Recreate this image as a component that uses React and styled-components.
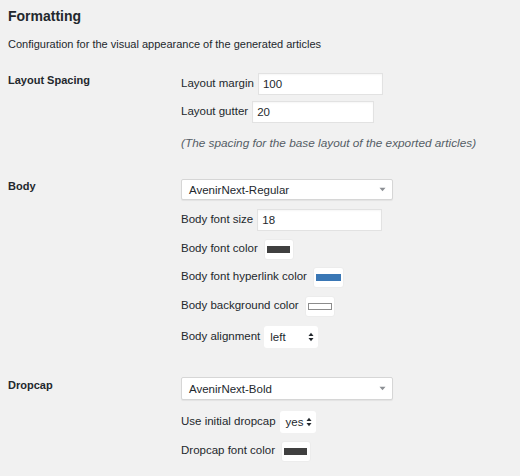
import React from 'react'
import styled, { createGlobalStyle } from 'styled-components'

const GlobalStyle = createGlobalStyle`
  html, body {
    margin: 0;
    padding: 0;
    background: #f1f1f1;
  }
  body {
    font-family: "Liberation Sans", Arial, sans-serif;
    color: #23282d;
  }
`

const Page = styled.div`
  padding: 5px 8px 0 8px;
  width: 512px;
  height: 476px;
  box-sizing: border-box;
  overflow: hidden;
`

const Title = styled.h2`
  font-size: 14px;
  font-weight: 700;
  margin: 1px 0 0 0;
  line-height: 20px;
`

const Description = styled.p`
  font-size: 11px;
  margin: 11px 0 0 0;
  line-height: 14px;
  color: #23282d;
`

const Table = styled.div`
  display: flex;
  flex-direction: column;
  margin-top: 22px;
`

const Section = styled.div`
  display: grid;
  grid-template-columns: 173px 1fr;
  margin-bottom: ${({ $gap }) => $gap || 0}px;
`

const SectionLabel = styled.div`
  font-size: 11px;
  font-weight: 700;
  line-height: 14px;
  padding-top: ${({ $top }) => $top || 0}px;
`

const Fields = styled.div`
  display: flex;
  flex-direction: column;
  gap: ${({ $gap }) => $gap || 7}px;
`

const Row = styled.div`
  display: flex;
  align-items: center;
  gap: 4px;
  height: ${({ $h }) => $h || 22}px;
  margin-top: ${({ $mt }) => $mt || 0}px;
  font-size: 11.5px;
`

const Label = styled.span`
  white-space: nowrap;
  margin-top: -2px;
`

const TextInput = styled.div`
  box-sizing: border-box;
  width: ${({ $w }) => $w || 125}px;
  height: 22px;
  background: #fff;
  border: 1px solid #e2e2e2;
  box-shadow: inset 0 1px 2px rgba(0, 0, 0, 0.04);
  padding: 0 4px;
  display: flex;
  align-items: center;
  font-size: 11.5px;
`

const Note = styled.div`
  font-size: 11.8px;
  font-style: italic;
  color: #555d66;
  margin-top: 7px;
  line-height: 14px;
`

const Select = styled.div`
  box-sizing: border-box;
  width: 212px;
  height: ${({ $h }) => $h || 22}px;
  background: #fff;
  border: 1px solid #d6d6d6;
  border-radius: 2px;
  box-shadow: 0 1px 1px rgba(0, 0, 0, 0.06);
  display: flex;
  align-items: center;
  justify-content: space-between;
  padding: 0 6px 0 7px;
  font-size: 11.5px;
`

const SmallSelect = styled.div`
  box-sizing: border-box;
  width: ${({ $w }) => $w || 54}px;
  height: 22px;
  background: #fff;
  border-radius: 3px;
  display: flex;
  align-items: center;
  justify-content: space-between;
  padding: 0 4px 0 6px;
  font-size: 11.5px;
`

const Swatch = styled.div`
  box-sizing: border-box;
  width: ${({ $w }) => $w || 30}px;
  height: 21px;
  margin-left: 2px;
  background: #fff;
  border: 1px solid #ececec;
  border-radius: 3px;
  display: flex;
  align-items: center;
  justify-content: center;
`

const SwatchColor = styled.span`
  display: block;
  width: ${({ $w }) => $w || 21}px;
  height: 5px;
  background: ${({ $color }) => $color};
  border: 1px solid ${({ $border }) => $border || 'transparent'};
`

function DownArrow() {
  return (
    <svg width="7" height="5" viewBox="0 0 7 5">
      <path d="M0.5 0.8 L6.5 0.8 L3.5 4.3 Z" fill="#8c8f94" />
    </svg>
  )
}

function UpDown() {
  return (
    <svg width="6" height="10" viewBox="0 0 6 10">
      <path d="M0.5 4 L3 0.8 L5.5 4 Z" fill="#23282d" />
      <path d="M0.5 6 L3 9.2 L5.5 6 Z" fill="#23282d" />
    </svg>
  )
}

export default function App() {
  return (
    <>
      <GlobalStyle />
      <Page>
        <Title>Formatting</Title>
        <Description>Configuration for the visual appearance of the generated articles</Description>
        <Table>
          <Section $gap={29}>
            <SectionLabel>Layout Spacing</SectionLabel>
            <Fields $gap={6}>
              <Row>
                <Label>Layout margin</Label>
                <TextInput>100</TextInput>
              </Row>
              <Row>
                <Label>Layout gutter</Label>
                <TextInput $w={122}>20</TextInput>
              </Row>
              <Note>(The spacing for the base layout of the exported articles)</Note>
            </Fields>
          </Section>

          <Section $gap={28}>
            <SectionLabel>Body</SectionLabel>
            <Fields $gap={7}>
              <Select $h={21}>
                <span>AvenirNext-Regular</span>
                <DownArrow />
              </Select>
              <Row $h={23} $mt={1}>
                <Label>Body font size</Label>
                <TextInput>18</TextInput>
              </Row>
              <Row>
                <Label>Body font color</Label>
                <Swatch>
                  <SwatchColor $color="#404040" />
                </Swatch>
              </Row>
              <Row $mt={-1}>
                <Label>Body font hyperlink color</Label>
                <Swatch $w={31}>
                  <SwatchColor $color="#3a77b5" $w={23} />
                </Swatch>
              </Row>
              <Row>
                <Label>Body background color</Label>
                <Swatch $w={30}>
                  <SwatchColor $color="#fff" $border="#8c8c8c" $w={22} />
                </Swatch>
              </Row>
              <Row $h={24} $mt={1}>
                <Label>Body alignment</Label>
                <SmallSelect>
                  <span>left</span>
                  <UpDown />
                </SmallSelect>
              </Row>
            </Fields>
          </Section>

          <Section>
            <SectionLabel $top={1}>Dropcap</SectionLabel>
            <Fields $gap={7}>
              <Select $h={23}>
                <span>AvenirNext-Bold</span>
                <DownArrow />
              </Select>
              <Row $mt={4}>
                <Label>Use initial dropcap</Label>
                <SmallSelect $w={36}>
                  <span>yes</span>
                  <UpDown />
                </SmallSelect>
              </Row>
              <Row>
                <Label>Dropcap font color</Label>
                <Swatch>
                  <SwatchColor $color="#404040" />
                </Swatch>
              </Row>
            </Fields>
          </Section>
        </Table>
      </Page>
    </>
  )
}
